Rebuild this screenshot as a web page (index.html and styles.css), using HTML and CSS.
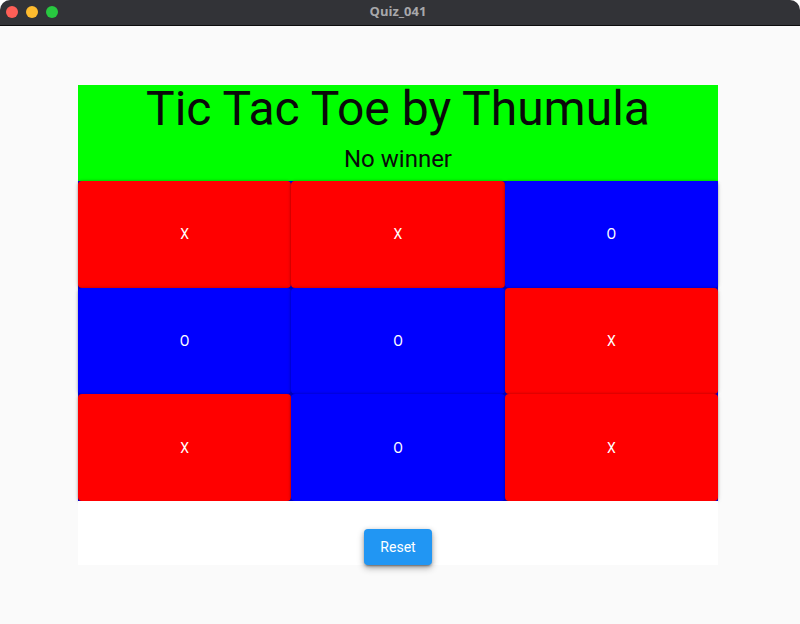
FILE: index.html
```html
<!DOCTYPE html>
<html>
<head>
<meta charset="utf-8">
<link rel="stylesheet" href="styles.css">
</head>
<body>
<div class="window">
  <div class="titlebar">
    <div class="lights">
      <span class="light red"></span>
      <span class="light yellow"></span>
      <span class="light green"></span>
    </div>
    <div class="wtitle">Quiz_041</div>
  </div>
  <div class="content">
    <div class="app">
      <div class="header">
        <div class="title">Tic Tac Toe by Thumula</div>
        <div class="status">No winner</div>
      </div>
      <div class="board">
        <button class="cell x">X</button>
        <button class="cell x">X</button>
        <button class="cell o">O</button>
        <button class="cell o">O</button>
        <button class="cell o">O</button>
        <button class="cell x">X</button>
        <button class="cell x">X</button>
        <button class="cell o">O</button>
        <button class="cell x">X</button>
      </div>
      <div class="footer">
        <button class="reset">Reset</button>
      </div>
    </div>
  </div>
</div>
</body>
</html>
```

FILE: styles.css
```css
* { box-sizing: border-box; }
html, body { margin: 0; padding: 0; }
body {
  width: 800px;
  height: 624px;
  background: #ffffff;
  overflow: hidden;
  font-family: Roboto, "Noto Sans", sans-serif;
}
.window {
  width: 800px;
  height: 624px;
  display: flex;
  flex-direction: column;
  border-radius: 10px 10px 0 0;
  overflow: hidden;
  background: #fafafa;
}
.titlebar {
  height: 26px;
  flex: none;
  background: #323337;
  border-bottom: 1px solid #0c0c0d;
  display: flex;
  align-items: center;
  position: relative;
}
.lights {
  display: flex;
  gap: 8px;
  padding-left: 6px;
  padding-bottom: 1px;
}
.light {
  width: 12px;
  height: 12px;
  border-radius: 50%;
  display: block;
}
.light.red { background: #fe5f57; }
.light.yellow { background: #febc2e; }
.light.green { background: #28c840; }
.wtitle {
  position: absolute;
  left: 0;
  right: 0;
  top: 0;
  height: 25px;
  line-height: 22px;
  text-align: center;
  font-family: "Open Sans", "Noto Sans", sans-serif;
  font-weight: 700;
  font-size: 13px;
  color: #a8a8ab;
  padding-right: 4px;
}
.content {
  flex: 1;
  display: flex;
  justify-content: center;
  padding-top: 59px;
  padding-right: 4px;
}
.app {
  width: 640px;
  height: 480px;
  display: flex;
  flex-direction: column;
}
.header {
  height: 96px;
  background: #00ff00;
  display: flex;
  flex-direction: column;
  align-items: center;
}
.title {
  font-size: 48px;
  line-height: 48px;
  color: #0a0a0a;
}
.status {
  font-size: 24px;
  line-height: 28px;
  color: #0a0a0a;
  margin-top: 12px;
}
.board {
  height: 320px;
  background: #0000ff;
  display: grid;
  grid-template-columns: repeat(3, 1fr);
  grid-template-rows: repeat(3, 1fr);
}
.cell {
  border: none;
  margin: 0;
  padding: 0;
  border-radius: 4px;
  font-family: Roboto, sans-serif;
  font-size: 14px;
  font-weight: 400;
  color: #ffffff;
  box-shadow: 0 3px 1px -2px rgba(0,0,0,0.2), 0 2px 2px 0 rgba(0,0,0,0.14), 0 1px 5px 0 rgba(0,0,0,0.12), 0 0 3px rgba(0,0,0,0.25);
}
.cell.x { background: #ff0000; }
.cell.o { background: #0000ff; }
.footer {
  height: 64px;
  background: #ffffff;
  display: flex;
  justify-content: center;
  align-items: flex-start;
  padding-top: 28px;
}
.reset {
  width: 68px;
  height: 36px;
  border: none;
  border-radius: 4px;
  background: #2196f3;
  color: #ffffff;
  font-family: Roboto, sans-serif;
  font-size: 14px;
  box-shadow: 0 3px 1px -2px rgba(0,0,0,0.2), 0 2px 2px 0 rgba(0,0,0,0.14), 0 1px 5px 0 rgba(0,0,0,0.12), 0 3px 7px rgba(0,0,0,0.3);
}
```
